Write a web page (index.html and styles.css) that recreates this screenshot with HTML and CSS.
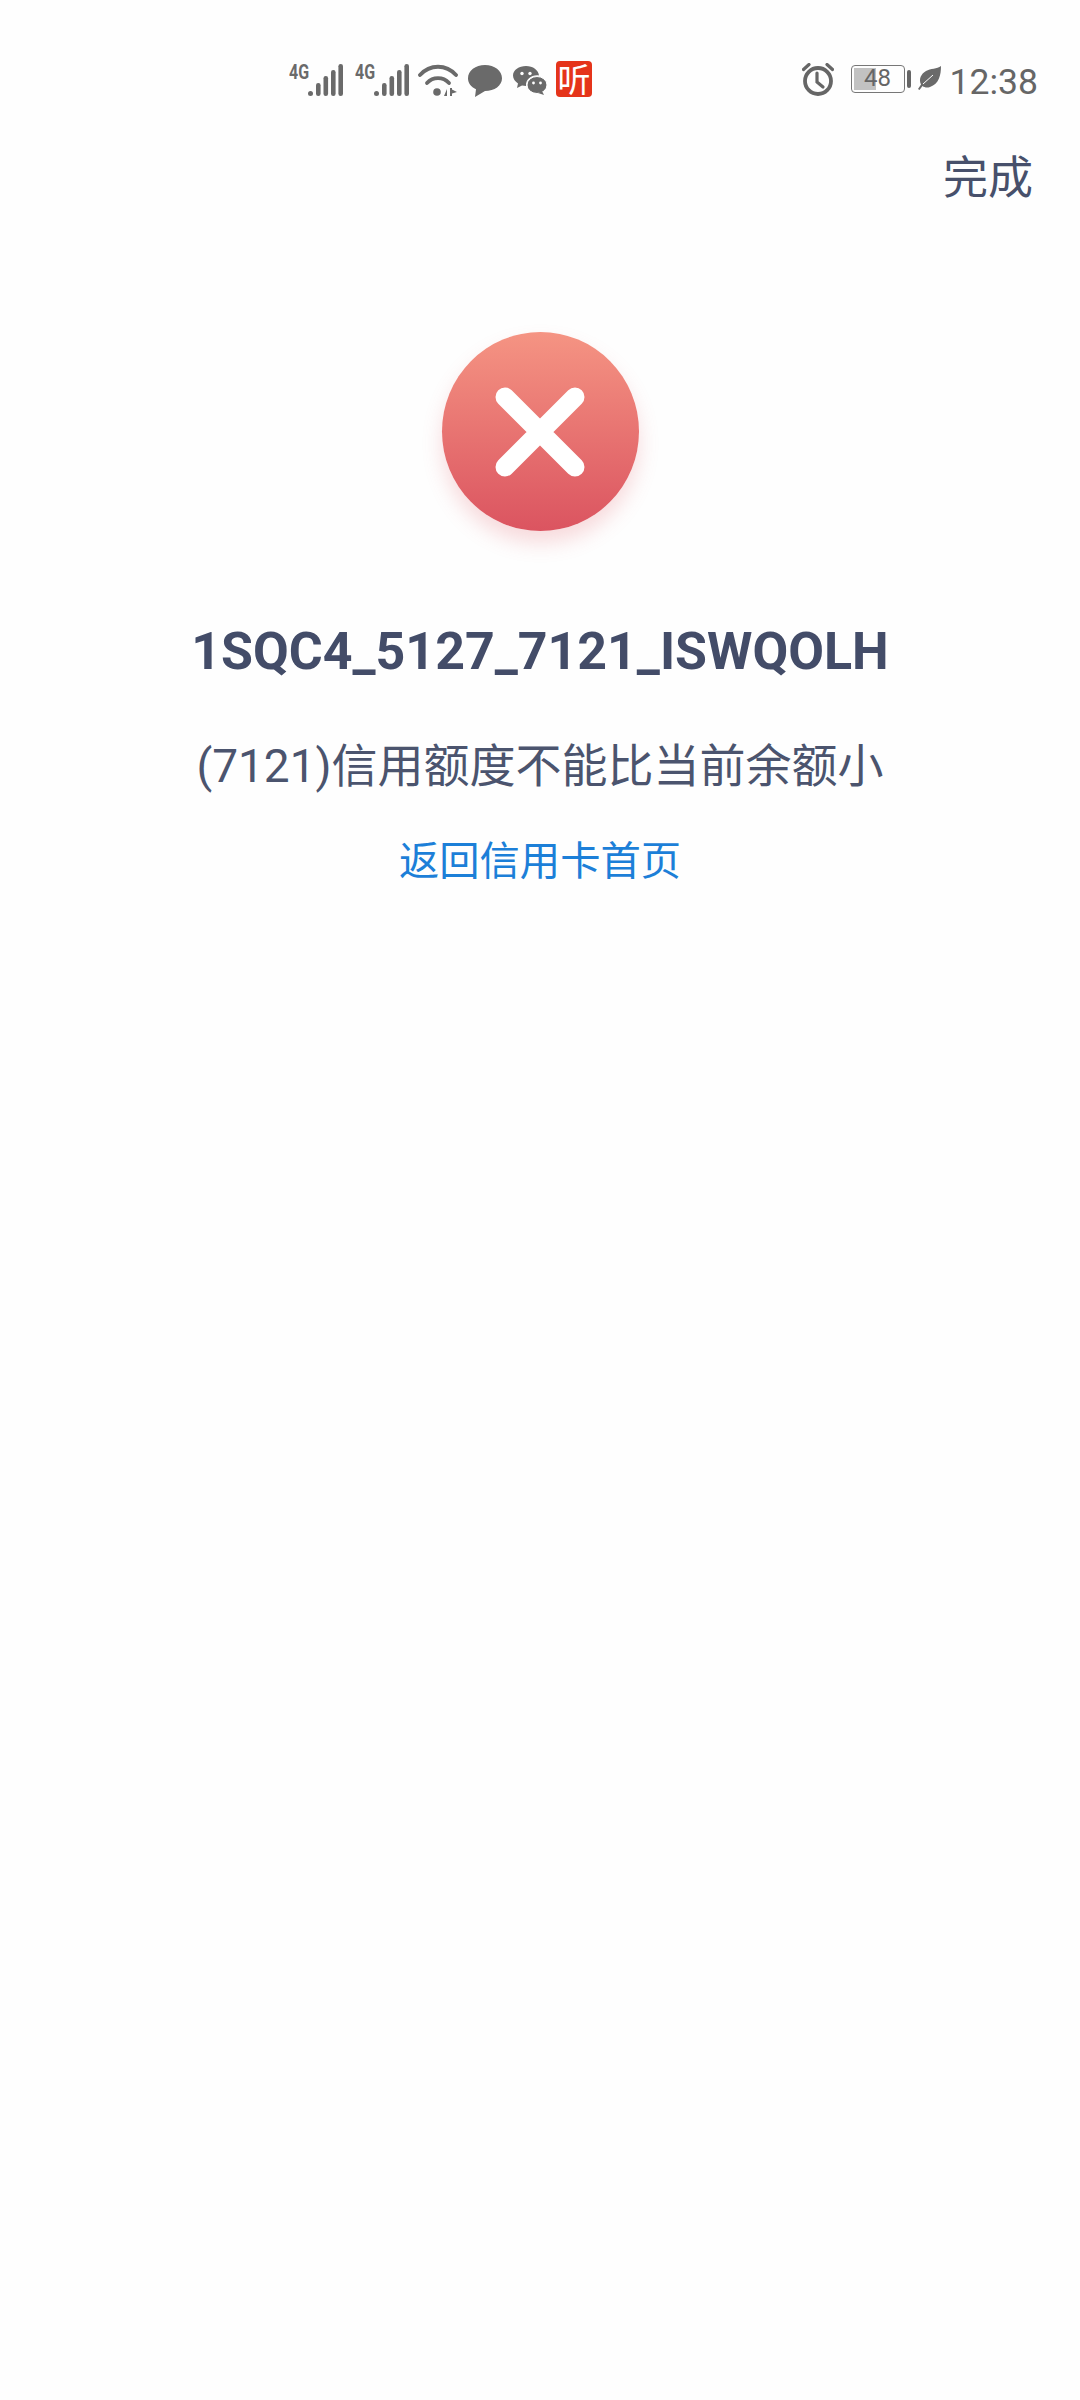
FILE: index.html
```html
<!DOCTYPE html>
<html lang="zh-CN">
<head>
<meta charset="utf-8">
<title>信用额度</title>
<link rel="stylesheet" href="styles.css">
</head>
<body>
<div class="status">
  <div class="status-group">
    <div class="sim"><span class="net">4G</span>
      <svg class="signal" viewBox="0 0 35 32"><g fill="#6a6a6a"><circle cx="2.500" cy="29.500" r="2.500"/><rect x="8" y="19" width="4.600" height="13" rx="2.200"/><rect x="15.500" y="12" width="4.600" height="20" rx="2.200"/><rect x="23" y="6" width="4.600" height="26" rx="2.200"/><rect x="30.400" y="0" width="4.600" height="32" rx="2.200"/></g></svg>
    </div>
    <div class="sim sim2"><span class="net">4G</span>
      <svg class="signal" viewBox="0 0 35 32"><g fill="#6a6a6a"><circle cx="2.500" cy="29.500" r="2.500"/><rect x="8" y="19" width="4.600" height="13" rx="2.200"/><rect x="15.500" y="12" width="4.600" height="20" rx="2.200"/><rect x="23" y="6" width="4.600" height="26" rx="2.200"/><rect x="30.400" y="0" width="4.600" height="32" rx="2.200"/></g></svg>
    </div>
    <svg class="wifi" viewBox="0 0 40 33"><g fill="none" stroke="#6a6a6a" stroke-width="3.800" stroke-linecap="round"><path d="M2 11C12 0 28 0 38 11"/><path d="M9 19C15 12.500 25 12.500 31 19"/></g><circle cx="19" cy="28" r="3.800" fill="#6a6a6a"/><path d="M29 25v7h-3zM32 24v8h2v-2.500l5-1.500-5-2.500v-1.500z" fill="#6a6a6a"/></svg>
    <svg class="bubble" viewBox="0 0 34 32"><path d="M17 0C26.500 0 34 5.800 34 13.200 34 20.600 26.500 26 17 26L7 32 8 24.200C3 22 0 18 0 13.200 0 5.800 7.500 0 17 0Z" fill="#6a6a6a"/></svg>
    <svg class="wechat" viewBox="0 0 34 29"><path d="M13 0C20 0 25.500 4.200 26 9.500 19 8.500 12.500 13 13 20L9 19.500 4 22 5 17.500C2 15.500 0 12.500 0 9.500 0 4 6 0 13 0Z" fill="#6a6a6a"/><ellipse cx="24" cy="19" rx="10" ry="8.500" fill="#6a6a6a" stroke="#fff" stroke-width="1"/><path d="M29 25l2 4-6-2z" fill="#6a6a6a"/><g fill="#fff"><circle cx="9" cy="7.500" r="1.700"/><circle cx="17" cy="7.500" r="1.700"/><circle cx="20.500" cy="17" r="1.400"/><circle cx="27.500" cy="17" r="1.400"/></g></svg>
    <div class="listen">听</div>
  </div>
  <div class="status-group">
    <svg class="alarm" viewBox="0 0 32 33"><g fill="none" stroke="#666" stroke-linecap="round"><circle cx="16" cy="18" r="13" stroke-width="3.800"/><path d="M15 10v9l6 5" stroke-width="3.200"/><path d="M1.500 6.500L7 1.500M30.500 6.500L25 1.500" stroke-width="3.200"/></g></svg>
    <div class="battery"><div class="battery-body"><div class="battery-fill"></div><span class="battery-num">48</span></div><div class="battery-nub"></div></div>
    <svg class="leaf" viewBox="0 0 23 24"><path d="M23 0C23 9 21 18 12 21 9 22 6.500 21.500 4.500 20L1.500 24 0 23 3 18.500C0.500 13 3 8 8 5 12.500 2.500 19 3 23 0Z" fill="#6a6a6a"/><path d="M5 18L15 9" stroke="#fff" stroke-width="1" fill="none"/></svg>
    <span class="time">12:38</span>
  </div>
</div>
<div class="nav"><span class="done">完成</span></div>
<main class="result">
  <div class="error-circle">
    <svg class="cross" viewBox="0 0 92 92"><path d="M11 11L81 81M81 11L11 81" fill="none" stroke="#fff" stroke-width="19" stroke-linecap="round"/></svg>
  </div>
  <h1 class="code">1SQC4_5127_7121_ISWQOLH</h1>
  <p class="message">(7121)信用额度不能比当前余额小</p>
  <a class="back">返回信用卡首页</a>
</main>
</body>
</html>
```
FILE: styles.css
```css
* { box-sizing: border-box; }
html, body { margin: 0; padding: 0; }
body {
  width: 1080px;
  height: 2400px;
  background: #fefefe;
  font-family: Roboto, "Noto Sans CJK SC", sans-serif;
  overflow: hidden;
}
.status {
  height: 149px;
  padding: 61px 42px 0 289px;
  display: flex;
  justify-content: space-between;
  align-items: flex-start;
}
.status-group { display: flex; align-items: flex-start; }
.sim { display: flex; width: 54px; height: 35px; margin-top: 3px; }
.sim2 { margin-left: 12px; }
.net {
  font: 700 20px/17px Roboto, sans-serif;
  color: #6a6a6a;
  width: 20px;
  flex: none;
  transform: scaleX(0.8);
  transform-origin: left top;
}
.signal { width: 35px; height: 32px; margin-left: -1px; flex: none; }
.wifi { width: 40px; height: 33px; margin: 3px 0 0 9px; }
.bubble { width: 34px; height: 32px; margin: 4px 0 0 10px; }
.wechat { width: 34px; height: 29px; margin: 5px 0 0 11px; }
.listen {
  width: 36px;
  height: 36px;
  margin-left: 9px;
  border-radius: 4px;
  background: #e5341a;
  color: #fff;
  font: 400 33px/34px "Noto Sans CJK SC", sans-serif;
  text-align: center;
}
.alarm { width: 32px; height: 33px; margin-top: 2px; }
.battery { display: flex; align-items: center; margin: 4px 0 0 17px; }
.battery-body {
  width: 54px;
  height: 28px;
  border: 1.500px solid #777;
  border-radius: 4px;
  padding: 2px;
  position: relative;
}
.battery-fill { width: 46%; height: 100%; background: #c2c2c2; }
.battery-num {
  position: absolute;
  inset: 0;
  text-align: center;
  font: 400 24px/25px Roboto, sans-serif;
  color: #666;
}
.battery-nub { width: 4px; height: 18px; margin-left: 2px; background: #666; border-radius: 2px; }
.leaf { width: 23px; height: 24px; margin: 5px 0 0 7px; }
.time {
  margin-left: 9px;
  font-size: 35.500px;
  line-height: 44px;
  color: #666;
  margin-top: -1px;
}
.nav {
  display: flex;
  justify-content: flex-end;
  padding-right: 47px;
  height: 60px;
}
.done { font-size: 45px; line-height: 60px; color: #47506b; }
.result {
  display: flex;
  flex-direction: column;
  align-items: center;
  padding-top: 123px;
}
.error-circle {
  width: 197px;
  height: 199px;
  border-radius: 50%;
  background: linear-gradient(180deg, #f59483 0%, #db5460 100%);
  box-shadow: 0 12px 20px rgba(224, 90, 100, 0.22);
  display: flex;
  align-items: center;
  justify-content: center;
}
.cross { width: 92px; height: 92px; }
.code {
  margin: 86px 0 0;
  font-size: 51.900px;
  line-height: 70px;
  font-weight: 700;
  color: #434c68;
}
.message {
  margin: 47px 0 0;
  font-size: 46px;
  line-height: 64px;
  font-weight: 400;
  color: #4b546e;
}
.back {
  margin-top: 36px;
  font-size: 40.300px;
  line-height: 56px;
  color: #1c7fd8;
}
```
